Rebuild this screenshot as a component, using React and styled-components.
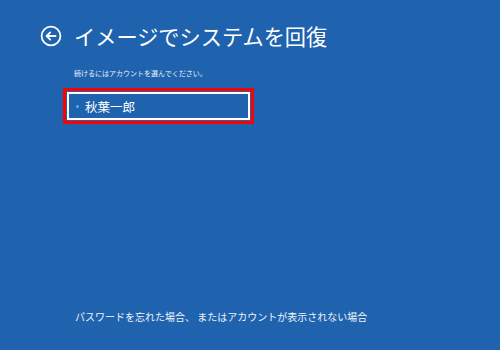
import React from "react";
import styled, { createGlobalStyle } from "styled-components";

const Global = createGlobalStyle`
  html, body { margin: 0; padding: 0; background: #1f63ae; }
  body { font-family: "Noto Sans CJK JP", "Noto Sans", sans-serif; }
`;

const Screen = styled.div`
  width: 500px;
  height: 350px;
  box-sizing: border-box;
  background: #1f63ae;
  color: #ffffff;
  display: flex;
  flex-direction: column;
  padding: 24px 0 0 40px;
`;

const Header = styled.div`
  display: flex;
  align-items: center;
  gap: 12px;
  height: 24px;
`;

const BackButton = styled.button`
  width: 22px;
  height: 22px;
  padding: 0;
  border: none;
  background: none;
  display: flex;
  align-items: center;
  justify-content: center;
  color: #fff;
`;

const Title = styled.h1`
  margin: 0;
  font-size: 21.2px;
  font-weight: 400;
  line-height: 24px;
  letter-spacing: 0;
  white-space: nowrap;
`;

const Content = styled.div`
  padding-left: 34px;
  display: flex;
  flex-direction: column;
`;

const Hint = styled.p`
  margin: 20px 0 0 0;
  font-size: 7px;
  line-height: 10px;
  color: #e8eef7;
`;

const AccountButton = styled.button`
  margin: 14px 0 0 -7px;
  width: 183px;
  height: 28px;
  box-sizing: border-box;
  border: 2px solid #ffffff;
  outline: 3px solid #ff0000;
  outline-offset: 1px;
  background: transparent;
  color: #ffffff;
  display: flex;
  align-items: center;
  gap: 6px;
  padding: 0 0 0 7px;
  font-family: inherit;
  font-size: 12.5px;
  cursor: pointer;
`;

const Dot = styled.span`
  width: 3px;
  height: 3px;
  border-radius: 50%;
  background: #4fb3f0;
  flex: none;
`;

const Footer = styled.p`
  margin: auto 0 26px 35px;
  font-size: 10px;
  line-height: 14px;
  color: #eef3fa;
  white-space: nowrap;
`;

const BackIcon = () => (
  <svg width="22" height="22" viewBox="0 0 22 22" fill="none" stroke="#fff" strokeWidth="1.8" strokeLinecap="round" strokeLinejoin="round">
    <circle cx="11" cy="11" r="9.4" />
    <path d="M15.5 11H6.8" />
    <path d="M10.2 7.4L6.6 11l3.6 3.6" />
  </svg>
);

export default function App() {
  return (
    <>
      <Global />
      <Screen>
        <Header>
          <BackButton aria-label="戻る">
            <BackIcon />
          </BackButton>
          <Title>イメージでシステムを回復</Title>
        </Header>
        <Content>
          <Hint>続けるにはアカウントを選んでください。</Hint>
          <AccountButton>
            <Dot />
            秋葉一郎
          </AccountButton>
        </Content>
        <Footer>パスワードを忘れた場合、 またはアカウントが表示されない場合</Footer>
      </Screen>
    </>
  );
}
